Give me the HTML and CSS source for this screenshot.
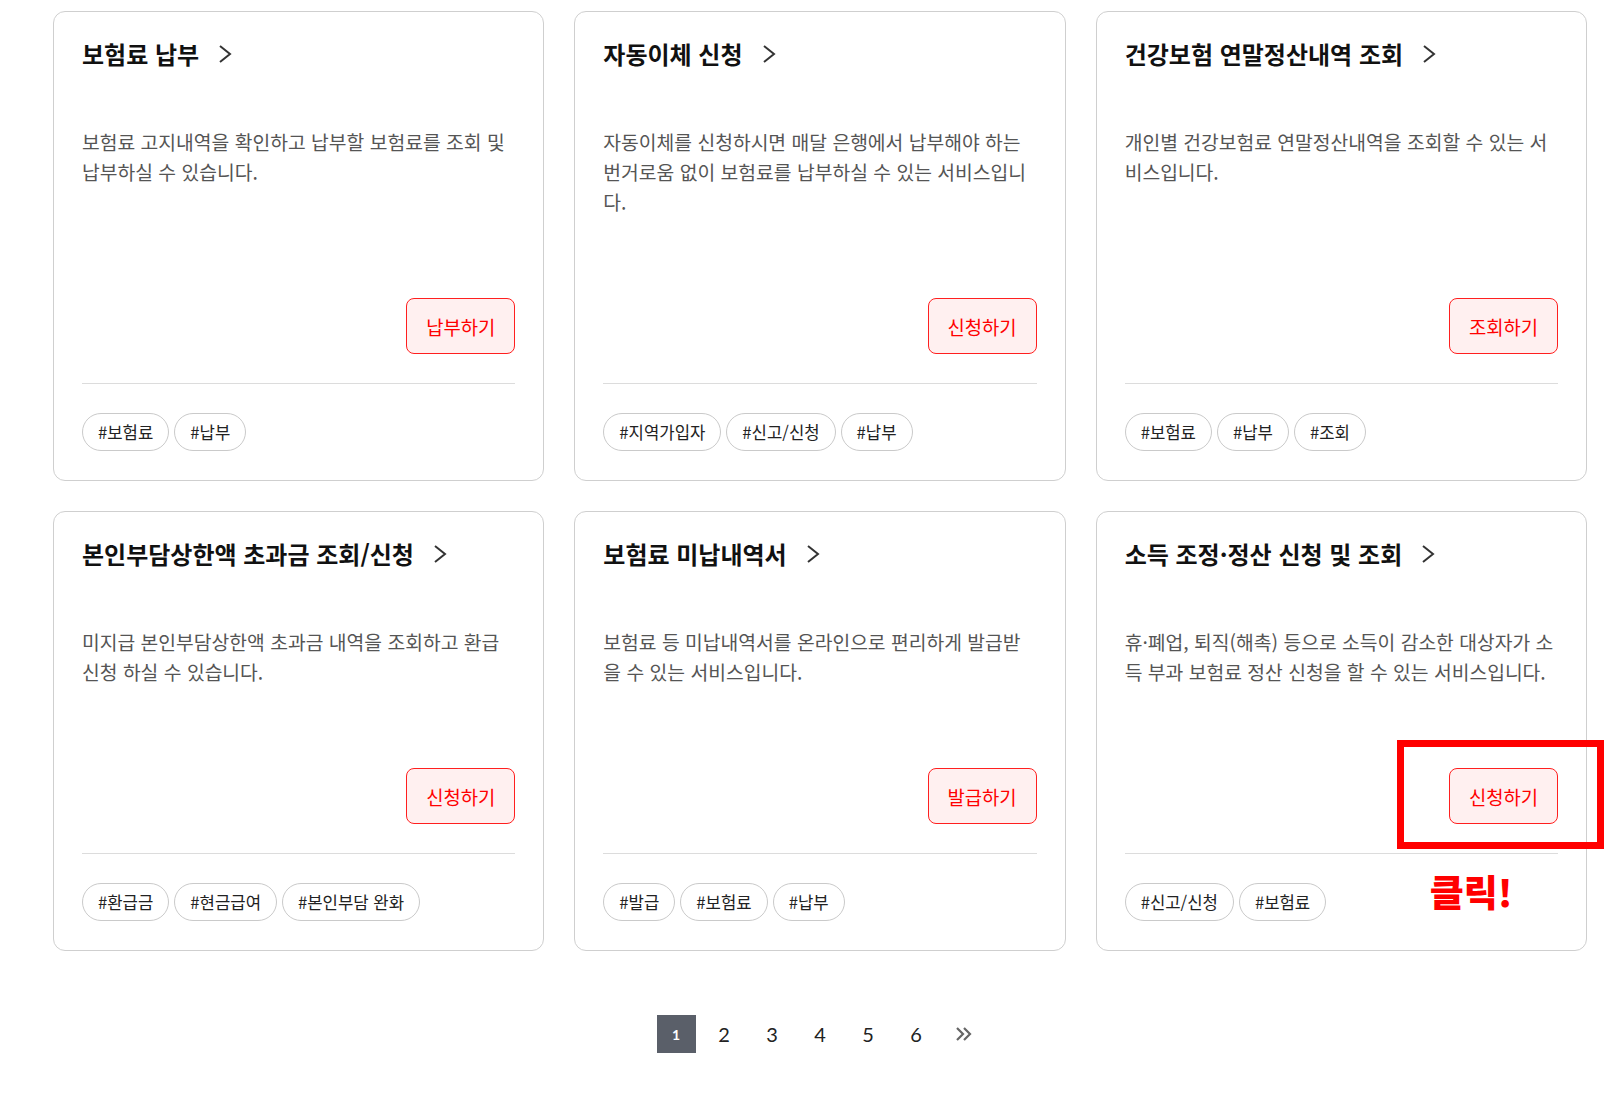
FILE: index.html
```html
<!DOCTYPE html>
<html lang="ko">
<head>
	<title>보험료 서비스</title>
	<meta charset="UTF-8">
	<meta name="viewport" content="width=device-width, initial-scale=1.0">
	<link rel="stylesheet" href="styles.css">
</head>
<body>
	<div class="wrap">
		<div class="card-grid">
			<!-- 1 -->
			<div class="card">
				<a class="card-title" href="#">보험료 납부
					<svg class="chev" viewBox="0 0 14 20"><polyline points="2,2 12,10 2,18"/></svg>
				</a>
				<p class="card-desc">보험료 고지내역을 확인하고 납부할 보험료를 조회 및 납부하실 수 있습니다.</p>
				<button class="card-btn">납부하기</button>
				<div class="card-tags">
					<span class="tag">#보험료</span>
					<span class="tag">#납부</span>
				</div>
			</div>
			<!-- 2 -->
			<div class="card">
				<a class="card-title" href="#">자동이체 신청
					<svg class="chev" viewBox="0 0 14 20"><polyline points="2,2 12,10 2,18"/></svg>
				</a>
				<p class="card-desc">자동이체를 신청하시면 매달 은행에서 납부해야 하는 번거로움 없이 보험료를 납부하실 수 있는 서비스입니다.</p>
				<button class="card-btn">신청하기</button>
				<div class="card-tags">
					<span class="tag">#지역가입자</span>
					<span class="tag">#신고/신청</span>
					<span class="tag">#납부</span>
				</div>
			</div>
			<!-- 3 -->
			<div class="card">
				<a class="card-title" href="#">건강보험 연말정산내역 조회
					<svg class="chev" viewBox="0 0 14 20"><polyline points="2,2 12,10 2,18"/></svg>
				</a>
				<p class="card-desc">개인별 건강보험료 연말정산내역을 조회할 수 있는 서비스입니다.</p>
				<button class="card-btn">조회하기</button>
				<div class="card-tags">
					<span class="tag">#보험료</span>
					<span class="tag">#납부</span>
					<span class="tag">#조회</span>
				</div>
			</div>
			<!-- 4 -->
			<div class="card">
				<a class="card-title" href="#">본인부담상한액 초과금 조회/신청
					<svg class="chev" viewBox="0 0 14 20"><polyline points="2,2 12,10 2,18"/></svg>
				</a>
				<p class="card-desc">미지급 본인부담상한액 초과금 내역을 조회하고 환급 신청 하실 수 있습니다.</p>
				<button class="card-btn">신청하기</button>
				<div class="card-tags">
					<span class="tag">#환급금</span>
					<span class="tag">#현금급여</span>
					<span class="tag">#본인부담 완화</span>
				</div>
			</div>
			<!-- 5 -->
			<div class="card">
				<a class="card-title" href="#">보험료 미납내역서
					<svg class="chev" viewBox="0 0 14 20"><polyline points="2,2 12,10 2,18"/></svg>
				</a>
				<p class="card-desc">보험료 등 미납내역서를 온라인으로 편리하게 발급받을 수 있는 서비스입니다.</p>
				<button class="card-btn">발급하기</button>
				<div class="card-tags">
					<span class="tag">#발급</span>
					<span class="tag">#보험료</span>
					<span class="tag">#납부</span>
				</div>
			</div>
			<!-- 6 -->
			<div class="card">
				<a class="card-title" href="#">소득 조정·정산 신청 및 조회
					<svg class="chev" viewBox="0 0 14 20"><polyline points="2,2 12,10 2,18"/></svg>
				</a>
				<p class="card-desc">휴·폐업, 퇴직(해촉) 등으로 소득이 감소한 대상자가 소득 부과 보험료 정산 신청을 할 수 있는 서비스입니다.</p>
				<button class="card-btn">신청하기</button>
				<div class="card-tags">
					<span class="tag">#신고/신청</span>
					<span class="tag">#보험료</span>
				</div>
				<!-- annotation -->
				<div class="mark-box"></div>
				<div class="mark-text">클릭!</div>
			</div>
		</div>

		<div class="pager">
			<a class="page active" href="#">1</a>
			<a class="page" href="#">2</a>
			<a class="page" href="#">3</a>
			<a class="page" href="#">4</a>
			<a class="page" href="#">5</a>
			<a class="page" href="#">6</a>
			<a class="page" href="#">
				<svg class="next" viewBox="0 0 20 16"><polyline points="3,2 9,8 3,14"/><polyline points="10,2 16,8 10,14"/></svg>
			</a>
		</div>
	</div>
</body>
</html>
```

FILE: styles.css
```css
body {
	margin: 0;
	background-color: #fff;
	font-family: "Noto Sans CJK KR", "Noto Sans", sans-serif;
	color: #222;
}
.wrap {
	width: 1534px;
	padding: 11px 0 40px 53px;
}
.card-grid {
	display: grid;
	grid-template-columns: repeat(3, 1fr);
	gap: 30px;
}
.card {
	position: relative;
	display: flex;
	flex-direction: column;
	border: 1px solid #cfcfcf;
	border-radius: 12px;
	padding: 26px 28px 29px;
	background-color: #fff;
}
.card-title {
	display: flex;
	align-items: center;
	font-size: 24px;
	font-weight: 700;
	line-height: 32px;
	color: #111;
	text-decoration: none;
}
.chev {
	width: 14px;
	height: 20px;
	margin-left: 19px;
	fill: none;
	stroke: #333;
	stroke-width: 2;
}
/* description grows so the buttons line up across a row */
.card-desc {
	flex: 1;
	margin: 57px 0 81px;
	font-size: 19.3px;
	line-height: 30px;
	color: #555;
}
.card-btn {
	align-self: flex-end;
	height: 56px;
	padding: 0 19px;
	border: 1px solid #ff1f1f;
	border-radius: 8px;
	background-color: #fff0f0;
	color: #f00;
	font-family: inherit;
	font-size: 18.8px;
	cursor: pointer;
}
.card-tags {
	display: flex;
	gap: 5px;
	margin-top: 29px;
	padding-top: 29px;
	border-top: 1px solid #dcdcdc;
}
.tag {
	height: 38px;
	line-height: 36px;
	padding: 0 15px;
	border: 1px solid #cacaca;
	border-radius: 19px;
	font-size: 16.7px;
	color: #222;
	box-sizing: border-box;
}
.mark-box {
	position: absolute;
	left: 300px;
	top: 228px;
	width: 207px;
	height: 109px;
	border: 7px solid #ff0000;
	box-sizing: border-box;
}
.mark-text {
	position: absolute;
	left: 333px;
	top: 361px;
	font-size: 37px;
	line-height: 37px;
	font-weight: 900;
	color: #ff0000;
}
.pager {
	display: flex;
	justify-content: center;
	gap: 9px;
	margin-top: 64px;
}
.page {
	width: 39px;
	height: 38px;
	display: flex;
	align-items: center;
	justify-content: center;
	font-family: "Lato", sans-serif;
	font-size: 20px;
	color: #222;
	text-decoration: none;
}
.page.active {
	background-color: #5a5f69;
	color: #fff;
	font-size: 14px;
	font-weight: 700;
}
.next {
	width: 20px;
	height: 16px;
	fill: none;
	stroke: #666;
	stroke-width: 2.2;
}
```
